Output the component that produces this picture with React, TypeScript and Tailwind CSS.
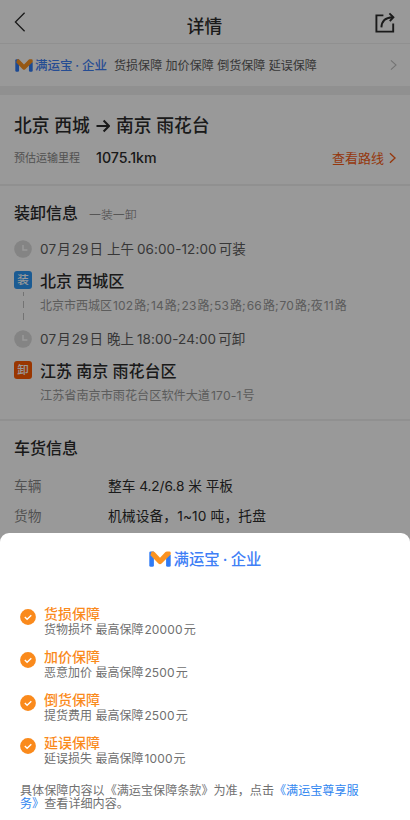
import React from 'react';
import { clsx } from 'clsx';

interface Guarantee {
  title: string;
  desc: string;
  amount: string;
}

const guarantees: Guarantee[] = [
  { title: '货损保障', desc: '货物损坏', amount: '20000' },
  { title: '加价保障', desc: '恶意加价', amount: '2500' },
  { title: '倒货保障', desc: '提货费用', amount: '2500' },
  { title: '延误保障', desc: '延误损失', amount: '1000' },
];

const BrandMark = ({ className }: { className?: string }) => (
  <svg viewBox="0 0 22 16" className={className} fill="none">
    <path d="M0.3 1.8Q0.3 0.4 1.7 0.4H4.9V14.2Q4.9 15.7 3.4 15.7H1.8Q0.3 15.7 0.3 14.2Z" fill="#2f7bf6" />
    <path d="M17.1 4H21.7V14.2Q21.7 15.7 20.2 15.7H18.6Q17.1 15.7 17.1 14.2Z" fill="#2f7bf6" />
    <path d="M2.6 0.4H4.2Q5 0.4 5.6 1.1L11 6.8L16.4 1.1Q17 0.4 17.8 0.4H20.3Q21.7 0.4 21.7 1.8V3.6L12.6 12.5Q11 14 9.4 12.5L1.4 4.2Z" fill="#fb9322" />
  </svg>
);

const Chevron = ({ className, width = 1.2 }: { className?: string; width?: number }) => (
  <svg viewBox="0 0 8 14" className={className} fill="none" stroke="currentColor" strokeWidth={width}>
    <path d="M1 1.5L7 7L1 12.5" />
  </svg>
);

const Num = ({ children }: { children: React.ReactNode }) => <span className="mx-[1px] tracking-[0.15px]">{children}</span>;

const ClockRow = ({ children }: { children: React.ReactNode }) => (
  <div className="flex h-5 items-center">
    <svg viewBox="0 0 18 18" className="mr-2 size-[18px] shrink-0" fill="none">
      <circle cx="9" cy="9" r="8.8" fill="#dcdcdc" />
      <path d="M9 5V10H13.4" stroke="#fff" strokeWidth="1.5" />
    </svg>
    <span className="-ml-[1px] whitespace-nowrap pt-px text-[13.5px] text-[#5c5c5c]">{children}</span>
  </div>
);

const PlaceRow = ({ tag, variant, children }: { tag: string; variant: 'load' | 'unload'; children: React.ReactNode }) => (
  <div className="flex h-5 items-center">
    <span
      className={clsx(
        'mr-2 flex size-[18px] shrink-0 items-center justify-center rounded-[3px] pt-[2px] text-[11.5px] font-medium leading-none text-white',
        variant === 'load' ? 'bg-[#2d98f5]' : 'bg-[#ff5a00]'
      )}
    >
      {tag}
    </span>
    <span className="whitespace-nowrap pt-[2px] text-[16px] font-medium text-[#2c2c2c]">{children}</span>
  </div>
);

const DetailPage = () => (
  <div className="h-[820px] bg-white">
    <header className="flex h-11 items-center justify-between border-b border-[#f0f0f0] pl-[14px] pr-[14px]">
      <svg viewBox="0 0 12 20" className="h-5 w-3" fill="none" stroke="#2c2c2c" strokeWidth="1.3">
        <path d="M10.6 0.8L1.4 10L10.6 19.2" />
      </svg>
      <h1 className="ml-[9px] pt-[11px] text-[17.7px] font-medium text-[#2c2c2c]">详情</h1>
      <svg viewBox="0 0 22 22" className="mt-[2px] size-[22px]" fill="none" stroke="#2c2c2c" strokeWidth="1.9">
        <path d="M9.4 3.4H2.4V19.6H19.2V11.4" />
        <path d="M7.4 15.4C7.6 9.2 11 5.6 18.6 5.2" />
        <path d="M15.4 1.4L19.4 5.2L15.8 9.2" />
      </svg>
    </header>

    <div className="flex h-[42px] items-center pl-[15px] pr-[13px]">
      <BrandMark className="h-[13px] w-[18px]" />
      <span className="ml-[2px] w-[79px] whitespace-nowrap pt-[2px] text-[12.5px] font-medium text-[#3f80f6]">
        满运宝<span className="inline-block w-[9.5px] text-center">·</span>企业
      </span>
      <span className="whitespace-nowrap pt-[2px] text-[12.05px] text-[#5c5c5c]">货损保障 加价保障 倒货保障 延误保障</span>
      <Chevron className="ml-auto h-[12px] w-[7px] text-[#c0c0c0]" />
    </div>
    <div className="h-[9px] bg-[#f0f0f0]" />

    <section className="h-[91px] border-b-2 border-[#f0f0f0] px-[14px] pt-[18px]">
      <h2 className="flex h-[26px] items-center whitespace-nowrap text-[17.8px] font-medium text-[#2c2c2c]">
        北京 西城
        <svg viewBox="0 0 14 14" className="mx-[6px] size-[14px]" fill="none" stroke="#2c2c2c" strokeWidth="2.1">
          <path d="M0.5 7H12.6M7.6 1.6L13 7L7.6 12.4" />
        </svg>
        南京 雨花台
      </h2>
      <div className="mt-[9px] flex h-5 items-center">
        <span className="w-[82px] pt-px text-[11px] text-[#888]">预估运输里程</span>
        <span className="text-[14.2px] font-medium text-[#2c2c2c]">1075.1km</span>
        <span className="ml-auto pt-px text-[13px] text-[#f95c14]">查看路线</span>
        <Chevron className="ml-[5px] h-[12px] w-[7px] text-[#f95c14]" width={1.6} />
      </div>
    </section>

    <section className="h-[235px] border-b-2 border-[#f0f0f0] px-[14px] pt-[17px]">
      <div className="flex h-5 items-center">
        <h3 className="w-[75px] text-[16px] font-medium text-[#2c2c2c]">装卸信息</h3>
        <span className="pt-[3px] text-[11.9px] font-light text-[#777]">一装一卸</span>
      </div>
      <div className="mt-4">
        <ClockRow>
          <Num>07</Num>月<Num>29</Num>日 上午<span className="ml-[3px] mr-[2px] tracking-[0.1px]">06:00-12:00</span>可装
        </ClockRow>
      </div>
      <div className="mt-[11px]">
        <PlaceRow tag="装" variant="load">北京 西城区</PlaceRow>
      </div>
      <div className="flex h-[39px]">
        <svg viewBox="0 0 18 39" className="mr-2 h-[39px] w-[18px]" stroke="#c0c0c0" strokeWidth="1">
          <path d="M9.5 2V31" strokeDasharray="7 5" strokeDashoffset="3" />
        </svg>
        <p className="whitespace-nowrap pt-[7px] text-[12px] leading-[18px] text-[#999]">
          北京市西城区<Num>102</Num>路;<Num>14</Num>路;<Num>23</Num>路;<Num>53</Num>路;<Num>66</Num>路;<Num>70</Num>路;夜<Num>11</Num>路
        </p>
      </div>
      <ClockRow>
        <Num>07</Num>月<Num>29</Num>日 晚上<span className="ml-[3px] mr-[2px] tracking-[0.1px]">18:00-24:00</span>可卸
      </ClockRow>
      <div className="mt-[11px]">
        <PlaceRow tag="卸" variant="unload">江苏 南京 雨花台区</PlaceRow>
      </div>
      <p className="ml-[26px] whitespace-nowrap pt-[7px] text-[12.15px] leading-[18px] text-[#999]">
        江苏省南京市雨花台区软件大道<Num>170-1</Num>号
      </p>
    </section>

    <section className="px-[14px] pt-[17px] text-[13.7px]">
      <h3 className="h-5 text-[16px] font-medium leading-5 text-[#2c2c2c]">车货信息</h3>
      <div className="mt-[18px] flex h-5 items-center">
        <span className="w-[94px] pt-px text-[#888]">车辆</span>
        <span className="text-[#2c2c2c]">整车 <span className="tracking-[-0.1px]">4.2/6.8</span> 米 平板</span>
      </div>
      <div className="mt-[10px] flex h-5 items-center">
        <span className="w-[94px] pt-px text-[#888]">货物</span>
        <span className="tracking-[0.15px] text-[#2c2c2c]">机械设备，1~10 吨，托盘</span>
      </div>
    </section>
  </div>
);

const GuaranteeSheet = () => (
  <div className="absolute inset-x-0 bottom-0 h-[287px] rounded-t-[9px] bg-white">
    <div className="flex h-[51px] items-center justify-center">
      <BrandMark className="h-4 w-[22px]" />
      <span className="ml-[3px] whitespace-nowrap pt-[2px] text-[15.4px] font-medium text-[#3f80f6]">
        满运宝<span className="inline-block w-[11px] text-center">·</span>企业
      </span>
    </div>
    <ul className="mt-[21px] px-5">
      {guarantees.map((item) => (
        <li key={item.title} className="flex h-[43px]">
          <svg viewBox="0 0 16 16" className="mr-2 mt-[4px] size-4 shrink-0" fill="none">
            <circle cx="8" cy="8" r="7.9" fill="#fa8a1c" />
            <path d="M4.8 8L7.1 10.2L11.3 6.2" stroke="#fff" strokeWidth="1.4" />
          </svg>
          <div className="pt-px">
            <h4 className="h-4 text-[14px] font-medium leading-4 text-[#fa8a1c]">{item.title}</h4>
            <p className="h-4 whitespace-nowrap text-[12px] leading-4 text-[#707070]">
              {item.desc} 最高保障<Num>{item.amount}</Num>元
            </p>
          </div>
        </li>
      ))}
    </ul>
    <p className="ml-5 mt-[7px] whitespace-nowrap text-[12.1px] leading-[13px] text-[#707070]">
      具体保障内容以《满运宝保障条款》为准，点击<span className="text-[#2f86f0]">《满运宝尊享服<br />务》</span>查看详细内容。
    </p>
  </div>
);

export default function App() {
  return (
    <div className="relative h-[820px] w-[410px] overflow-hidden font-['Inter','Noto_Sans_CJK_SC',sans-serif]">
      <DetailPage />
      <div className="absolute inset-0 bg-black/40" />
      <GuaranteeSheet />
    </div>
  );
}
